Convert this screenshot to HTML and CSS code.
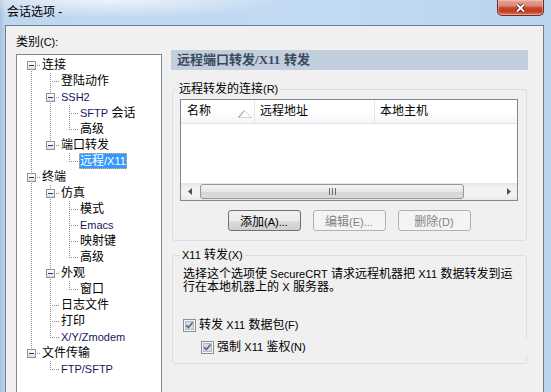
FILE: index.html
```html
<!DOCTYPE html>
<html lang="zh-CN">
<head>
    <meta charset="UTF-8">
    <title>会话选项</title>
    <link rel="stylesheet" href="styles.css">
</head>
<body>
    <div class="window">
        <div class="titlebar">
            <span class="title">会话选项 -</span>
            <span class="close">
                <svg width="13" height="10" viewBox="0 0 13 10">
                    <path d="M3 1.5L10 8.5M10 1.5L3 8.5" stroke="#5a1c12" stroke-width="3.4" fill="none"/>
                    <path d="M3 1.5L10 8.5M10 1.5L3 8.5" stroke="#fff" stroke-width="1.8" fill="none"/>
                </svg>
            </span>
        </div>

        <div class="client">
            <div class="left">
                <div class="cat-label">类别<span class="en">(C):</span></div>
                <div class="tree">
                    <div class="row"><span class="c f"><i class="box"></i></span><span class="lbl">连接</span></div>
                    <div class="row"><span class="c v"></span><span class="c t"></span><span class="lbl">登陆动作</span></div>
                    <div class="row"><span class="c v"></span><span class="c t"><i class="box"></i></span><span class="lbl en">SSH2</span></div>
                    <div class="row"><span class="c v"></span><span class="c v"></span><span class="c t"></span><span class="lbl"><span class="en">SFTP</span> 会话</span></div>
                    <div class="row"><span class="c v"></span><span class="c v"></span><span class="c e"></span><span class="lbl">高级</span></div>
                    <div class="row"><span class="c v"></span><span class="c e"><i class="box"></i></span><span class="lbl">端口转发</span></div>
                    <div class="row"><span class="c v"></span><span class="c"></span><span class="c e"></span><span class="lbl sel">远程<span class="en">/X11</span></span></div>
                    <div class="row"><span class="c t"><i class="box"></i></span><span class="lbl">终端</span></div>
                    <div class="row"><span class="c v"></span><span class="c t"><i class="box"></i></span><span class="lbl">仿真</span></div>
                    <div class="row"><span class="c v"></span><span class="c v"></span><span class="c t"></span><span class="lbl">模式</span></div>
                    <div class="row"><span class="c v"></span><span class="c v"></span><span class="c t"></span><span class="lbl en">Emacs</span></div>
                    <div class="row"><span class="c v"></span><span class="c v"></span><span class="c t"></span><span class="lbl">映射键</span></div>
                    <div class="row"><span class="c v"></span><span class="c v"></span><span class="c e"></span><span class="lbl">高级</span></div>
                    <div class="row"><span class="c v"></span><span class="c t"><i class="box"></i></span><span class="lbl">外观</span></div>
                    <div class="row"><span class="c v"></span><span class="c v"></span><span class="c e"></span><span class="lbl">窗口</span></div>
                    <div class="row"><span class="c v"></span><span class="c t"></span><span class="lbl">日志文件</span></div>
                    <div class="row"><span class="c v"></span><span class="c t"></span><span class="lbl">打印</span></div>
                    <div class="row"><span class="c v"></span><span class="c e"></span><span class="lbl en">X/Y/Zmodem</span></div>
                    <div class="row"><span class="c e"><i class="box"></i></span><span class="lbl">文件传输</span></div>
                    <div class="row"><span class="c"></span><span class="c e"></span><span class="lbl en">FTP/SFTP</span></div>
                </div>
            </div>

            <div class="right">
                <div class="page-title">远程端口转发<span class="ser">/X11</span> 转发</div>

                <fieldset class="group g1">
                    <legend>远程转发的连接<span class="en">(R)</span></legend>
                    <div class="listview">
                        <div class="lv-head">
                            <div class="col col1">名称
                                <svg class="sort" width="15" height="8" viewBox="0 0 15 8">
                                    <path d="M0.5 7.5L6.5 0.5" stroke="#7a7a7a" fill="none"/>
                                    <path d="M6.5 0.5L13.5 7.5H1" stroke="#d2d2d2" fill="none"/>
                                </svg>
                            </div>
                            <div class="col col2">远程地址</div>
                            <div class="col col3">本地主机</div>
                        </div>
                        <div class="lv-body"></div>
                        <div class="hscroll">
                            <span class="arrow">
                                <svg width="4" height="7" viewBox="0 0 4 7"><path d="M4 0V7L0 3.5Z" fill="#505050"/></svg>
                            </span>
                            <span class="thumb"><i class="grip"></i></span>
                            <span class="arrow">
                                <svg width="4" height="7" viewBox="0 0 4 7"><path d="M0 0V7L4 3.5Z" fill="#505050"/></svg>
                            </span>
                        </div>
                    </div>
                    <div class="buttons">
                        <button class="btn">添加<span class="en">(A)...</span></button>
                        <button class="btn" disabled>编辑<span class="en">(E)...</span></button>
                        <button class="btn" disabled>删除<span class="en">(D)</span></button>
                    </div>
                </fieldset>

                <fieldset class="group g2">
                    <legend><span class="en">X11</span> 转发<span class="en">(X)</span></legend>
                    <p class="desc">选择这个选项使 <span class="en">SecureCRT</span> 请求远程机器把 <span class="en">X11</span> 数据转发到运<br>行在本地机器上的 <span class="en">X</span> 服务器。</p>
                    <div class="check">
                        <svg class="cb" width="13" height="13" viewBox="0 0 13 13">
                            <rect x="0.5" y="0.5" width="12" height="12" fill="#f6f6f6" stroke="#8f8f8f"/>
                            <rect x="2.5" y="2.5" width="8" height="8" fill="#d8dce3" stroke="#b4bac4"/>
                            <path d="M3.2 6.2L5.4 8.6L9.6 3.6" stroke="#55678a" stroke-width="1.6" fill="none"/>
                        </svg>
                        <span>转发 <span class="en">X11</span> 数据包<span class="en">(F)</span></span>
                    </div>
                    <div class="check sub">
                        <svg class="cb" width="13" height="13" viewBox="0 0 13 13">
                            <rect x="0.5" y="0.5" width="12" height="12" fill="#f6f6f6" stroke="#8f8f8f"/>
                            <rect x="2.5" y="2.5" width="8" height="8" fill="#d8dce3" stroke="#b4bac4"/>
                            <path d="M3.2 6.2L5.4 8.6L9.6 3.6" stroke="#55678a" stroke-width="1.6" fill="none"/>
                        </svg>
                        <span>强制 <span class="en">X11</span> 鉴权<span class="en">(N)</span></span>
                    </div>
                </fieldset>
            </div>
        </div>
    </div>
</body>
</html>
```

FILE: styles.css
```css
* {
    margin: 0;
    padding: 0;
    box-sizing: border-box;
}

body {
    width: 551px;
    height: 392px;
    overflow: hidden;
    font-family: "Liberation Sans", "Noto Sans CJK SC", sans-serif;
    font-size: 12px;
    color: #000;
    background:
        radial-gradient(ellipse 180px 18px at 110px 0, rgba(255,255,255,0.7), rgba(255,255,255,0)),
        linear-gradient(to right, #a9c0da 0, #bfd6ef 5px, #c3daf3 60%, #bad3ee 100%);
}

.en {
    font-family: "Liberation Sans", sans-serif;
    font-size: 11px;
}

.window {
    height: 392px;
    display: flex;
    flex-direction: column;
}

/* title bar */
.titlebar {
    height: 25px;
    flex: none;
    display: flex;
    justify-content: space-between;
    align-items: flex-start;
    padding-left: 7px;
}

.title {
    margin-top: 4px;
    line-height: 16px;
}

.close {
    width: 47px;
    height: 16px;
    margin-right: 7px;
    display: flex;
    align-items: center;
    justify-content: center;
    border: 1px solid #6b3128;
    border-top: none;
    border-radius: 0 0 5px 5px;
    background: linear-gradient(#e8a797 0, #dc8572 40%, #c8442d 52%, #c33c25 75%, #dd7b62 100%);
    box-shadow: inset 0 0 0 1px rgba(255,210,200,0.45);
}

/* client area */
.client {
    flex: 1;
    width: 539px;
    margin-left: 5px;
    border: 1px solid #6e7f92;
    border-bottom: none;
    background: #f0f0f0;
    display: flex;
    padding: 8px 0 0 10px;
}

.left {
    width: 146px;
    flex: none;
    display: flex;
    flex-direction: column;
}

.cat-label {
    line-height: 16px;
    height: 16px;
}

.tree {
    flex: 1;
    margin-top: 4px;
    border: 1px solid #828790;
    border-bottom: none;
    background: #fff;
    padding: 2px 0 0 5px;
    --vl: repeating-linear-gradient(to bottom, #8d8d8d 0 1px, transparent 1px 2px);
    --hl: repeating-linear-gradient(to right, #8d8d8d 0 1px, transparent 1px 2px);
}

.row {
    display: flex;
    height: 16px;
}

.c {
    width: 19px;
    height: 16px;
    flex: none;
    display: flex;
    justify-content: center;
}

.c.v {
    background: var(--vl) 9px 0 / 1px 16px no-repeat;
}

.c.t {
    background: var(--vl) 9px 0 / 1px 16px no-repeat, var(--hl) 9px 8px / 10px 1px no-repeat;
}

.c.e {
    background: var(--vl) 9px 0 / 1px 9px no-repeat, var(--hl) 9px 8px / 10px 1px no-repeat;
}

.c.f {
    background: var(--vl) 9px 8px / 1px 8px no-repeat, var(--hl) 9px 8px / 10px 1px no-repeat;
}

.box {
    width: 9px;
    height: 9px;
    margin-top: 4px;
    border: 1px solid #929292;
    background:
        linear-gradient(#1d3a8a, #1d3a8a) center / 5px 1px no-repeat,
        linear-gradient(#ffffff, #dedede);
}

.lbl {
    line-height: 16px;
    padding: 0 1px;
    white-space: nowrap;
}

.lbl.en,
.lbl .en {
    color: #16165c;
}

.lbl.sel {
    background: #3399ff;
    color: #fff;
    outline: 1px dotted #f3b35a;
    outline-offset: -1px;
}

.lbl.sel .en {
    color: #fff;
}

/* right page */
.right {
    width: 357px;
    flex: none;
    margin-left: 9px;
    padding-top: 16px;
}

.page-title {
    height: 20px;
    line-height: 20px;
    padding-left: 6px;
    background: #c1cedb;
    color: #3a4a5c;
    font-size: 13px;
    font-weight: bold;
}

.ser {
    font-family: "Liberation Serif", serif;
}

.group {
    min-width: 0;
    margin: 0 1px;
    border: 1px solid #d5dfe5;
    border-radius: 3px;
}

.group legend {
    padding: 0 2px;
    margin-left: -3px;
    line-height: 14px;
}

.g1 {
    margin-top: 12px;
    padding: 3px 8px 9px 7px;
}

.g2 {
    margin-top: 7px;
    padding: 6px 8px 8px 10px;
}

/* list view */
.listview {
    height: 102px;
    border: 1px solid #828790;
    background: #fff;
    display: flex;
    flex-direction: column;
}

.lv-head {
    height: 24px;
    flex: none;
    display: flex;
    border-bottom: 1px solid #e5e5e5;
    background: linear-gradient(#ffffff, #ffffff 50%, #f4f5f7);
}

.col {
    line-height: 23px;
    padding-left: 6px;
    border-right: 1px solid #e3e8ee;
    display: flex;
    align-items: center;
}

.col1 {
    width: 74px;
    justify-content: space-between;
}

.col2 {
    width: 120px;
    padding-left: 5px;
}

.col3 {
    flex: 1;
    padding-left: 5px;
    border-right: none;
}

.sort {
    margin: 4px 1px 0 0;
}

.lv-body {
    flex: 1;
}

.hscroll {
    height: 17px;
    flex: none;
    display: flex;
    justify-content: space-between;
    align-items: center;
    background: linear-gradient(#e3e3e3, #f1f1f1 25%, #f3f3f3 75%, #e6e6e6);
}

.arrow {
    width: 17px;
    height: 17px;
    display: flex;
    align-items: center;
    justify-content: center;
}

.thumb {
    width: 264px;
    height: 15px;
    margin-right: auto;
    margin-left: 2px;
    border: 1px solid #979797;
    border-radius: 3px;
    background: linear-gradient(#f5f5f5, #e6e6e6 50%, #d6d6d6 51%, #dadada);
    display: flex;
    align-items: center;
    justify-content: center;
}

.grip {
    width: 7px;
    height: 7px;
    background: repeating-linear-gradient(to right, #6a6a6a 0 1px, transparent 1px 3px);
}

/* buttons */
.buttons {
    display: flex;
    justify-content: center;
    gap: 12px;
    margin-top: 9px;
}

.btn {
    width: 73px;
    height: 21px;
    font: inherit;
    color: #000;
    border: 1px solid #707070;
    border-radius: 3px;
    background: linear-gradient(#f2f2f2, #ebebeb 50%, #dddddd 51%, #cfcfcf);
}

.btn:disabled {
    color: #838383;
    border-color: #adb2b5;
    background: #f4f4f4;
}

/* X11 group */
.desc {
    line-height: 13px;
    white-space: nowrap;
}

.check {
    display: flex;
    align-items: center;
    height: 16px;
    margin-top: 23px;
    line-height: 16px;
}

.check.sub {
    margin-top: 6px;
    margin-left: 18px;
    margin-right: -9px;
    background: #f0f0f0;
}

.cb {
    margin-right: 3px;
    flex: none;
}
```
